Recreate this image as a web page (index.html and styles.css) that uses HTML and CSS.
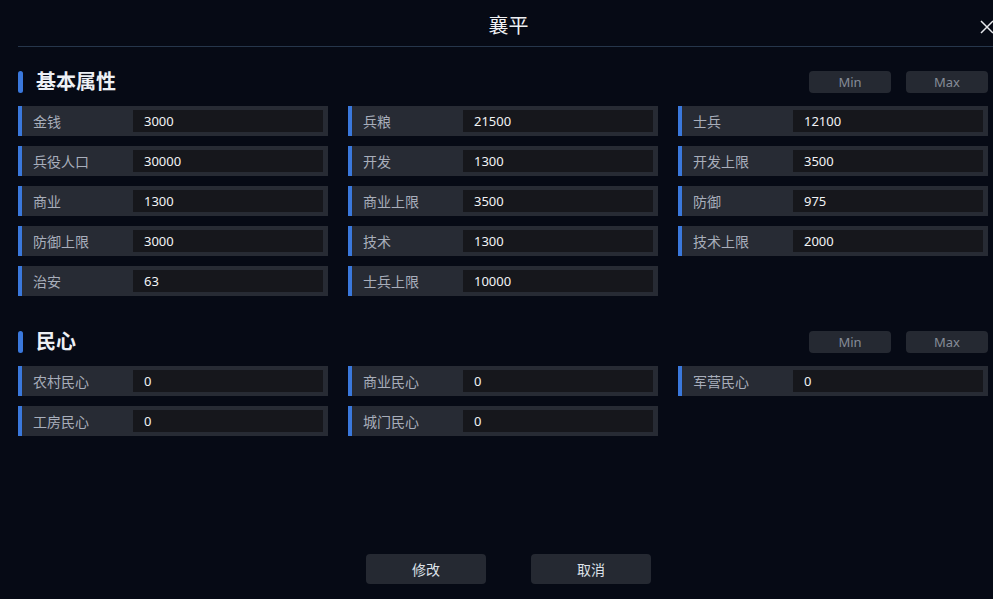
FILE: index.html
```html
<!DOCTYPE html>
<html>

<head>
	<meta charset="UTF-8">
	<title>襄平</title>
	<link rel="stylesheet" href="styles.css">
</head>

<body>
	<section class="dlg">
		<div class="dlgHead">
			<h1 class="title">襄平</h1>
			<span class="close">
				<svg width="14" height="14" viewBox="0 0 14 14"><path d="M1 1L13 13M13 1L1 13" stroke="#e6e8ec" stroke-width="1.5" fill="none" /></svg>
			</span>
		</div>

		<div class="part">
			<div class="partHead">
				<h2 class="partTitle">基本属性</h2>
				<div class="tools">
					<button class="mini">Min</button>
					<button class="mini">Max</button>
				</div>
			</div>
			<ul class="grid">
				<li><label>金钱</label><input type="text" value="3000" /></li>
				<li><label>兵粮</label><input type="text" value="21500" /></li>
				<li><label>士兵</label><input type="text" value="12100" /></li>
				<li><label>兵役人口</label><input type="text" value="30000" /></li>
				<li><label>开发</label><input type="text" value="1300" /></li>
				<li><label>开发上限</label><input type="text" value="3500" /></li>
				<li><label>商业</label><input type="text" value="1300" /></li>
				<li><label>商业上限</label><input type="text" value="3500" /></li>
				<li><label>防御</label><input type="text" value="975" /></li>
				<li><label>防御上限</label><input type="text" value="3000" /></li>
				<li><label>技术</label><input type="text" value="1300" /></li>
				<li><label>技术上限</label><input type="text" value="2000" /></li>
				<li><label>治安</label><input type="text" value="63" /></li>
				<li><label>士兵上限</label><input type="text" value="10000" /></li>
			</ul>
		</div>

		<div class="part">
			<div class="partHead">
				<h2 class="partTitle">民心</h2>
				<div class="tools">
					<button class="mini">Min</button>
					<button class="mini">Max</button>
				</div>
			</div>
			<ul class="grid">
				<li><label>农村民心</label><input type="text" value="0" /></li>
				<li><label>商业民心</label><input type="text" value="0" /></li>
				<li><label>军营民心</label><input type="text" value="0" /></li>
				<li><label>工房民心</label><input type="text" value="0" /></li>
				<li><label>城门民心</label><input type="text" value="0" /></li>
			</ul>
		</div>

		<div class="foot">
			<button class="btn">修改</button>
			<button class="btn">取消</button>
		</div>
	</section>
</body>

</html>
```

FILE: styles.css
```css
body,
h1,
h2 {
	margin: 0;
}

ul {
	margin: 0;
	padding: 0;
	list-style: none;
}

input,
button {
	outline: none;
	font-family: inherit;
}

html,
body {
	width: 100%;
	height: 100%;
	overflow: hidden;
}

body {
	background-color: #060a15;
	font-family: "Noto Sans", "Noto Sans CJK SC", sans-serif;
	color: #e8ebf0;
}

.dlg {
	width: 981px;
	margin-left: 18px;
}

.dlgHead {
	position: relative;
	height: 46px;
	border-bottom: 1px solid #26364b;
}

.title {
	text-align: center;
	font-size: 20px;
	font-weight: normal;
	line-height: 52px;
	color: #eef0f3;
}

.close {
	position: absolute;
	right: 5px;
	top: 20px;
	width: 14px;
	height: 14px;
}

.close svg {
	display: block;
}

.part {
	width: 970px;
	margin-top: 23px;
}

.part + .part {
	margin-top: 34px;
}

.partHead {
	display: flex;
	justify-content: space-between;
	align-items: center;
	height: 24px;
	margin-bottom: 12px;
}

.partTitle {
	display: flex;
	align-items: center;
	font-size: 20px;
	line-height: 22px;
	color: #edf0f4;
}

.partTitle::before {
	content: "";
	width: 5px;
	height: 22px;
	margin-right: 13px;
	border-radius: 3px;
	background-color: #3a78dc;
}

.tools {
	display: flex;
	gap: 15px;
}

.mini {
	width: 82px;
	height: 22px;
	padding: 0;
	border: 0;
	border-radius: 4px;
	background-color: #252932;
	color: #868c98;
	font-size: 13px;
}

.grid {
	display: grid;
	grid-template-columns: repeat(3, 310px);
	column-gap: 20px;
	row-gap: 10px;
}

.grid li {
	display: flex;
	align-items: center;
	height: 30px;
	padding: 0 5px 0 11px;
	border-left: 4px solid #3a78dc;
	background-color: #272b34;
}

.grid label {
	flex: 0 0 100px;
	font-size: 14px;
	color: #a8aebb;
}

.grid input {
	flex: 1;
	min-width: 0;
	height: 22px;
	margin-top: -1px;
	padding: 0 0 0 11px;
	border: 0;
	background-color: #16171c;
	color: #f2f3f5;
	font-size: 13px;
}

.foot {
	display: flex;
	justify-content: center;
	gap: 45px;
	margin-top: 118px;
}

.btn {
	width: 120px;
	height: 30px;
	padding: 0;
	border: 0;
	border-radius: 4px;
	background-color: #252932;
	color: #dde1e8;
	font-size: 14px;
}
```
